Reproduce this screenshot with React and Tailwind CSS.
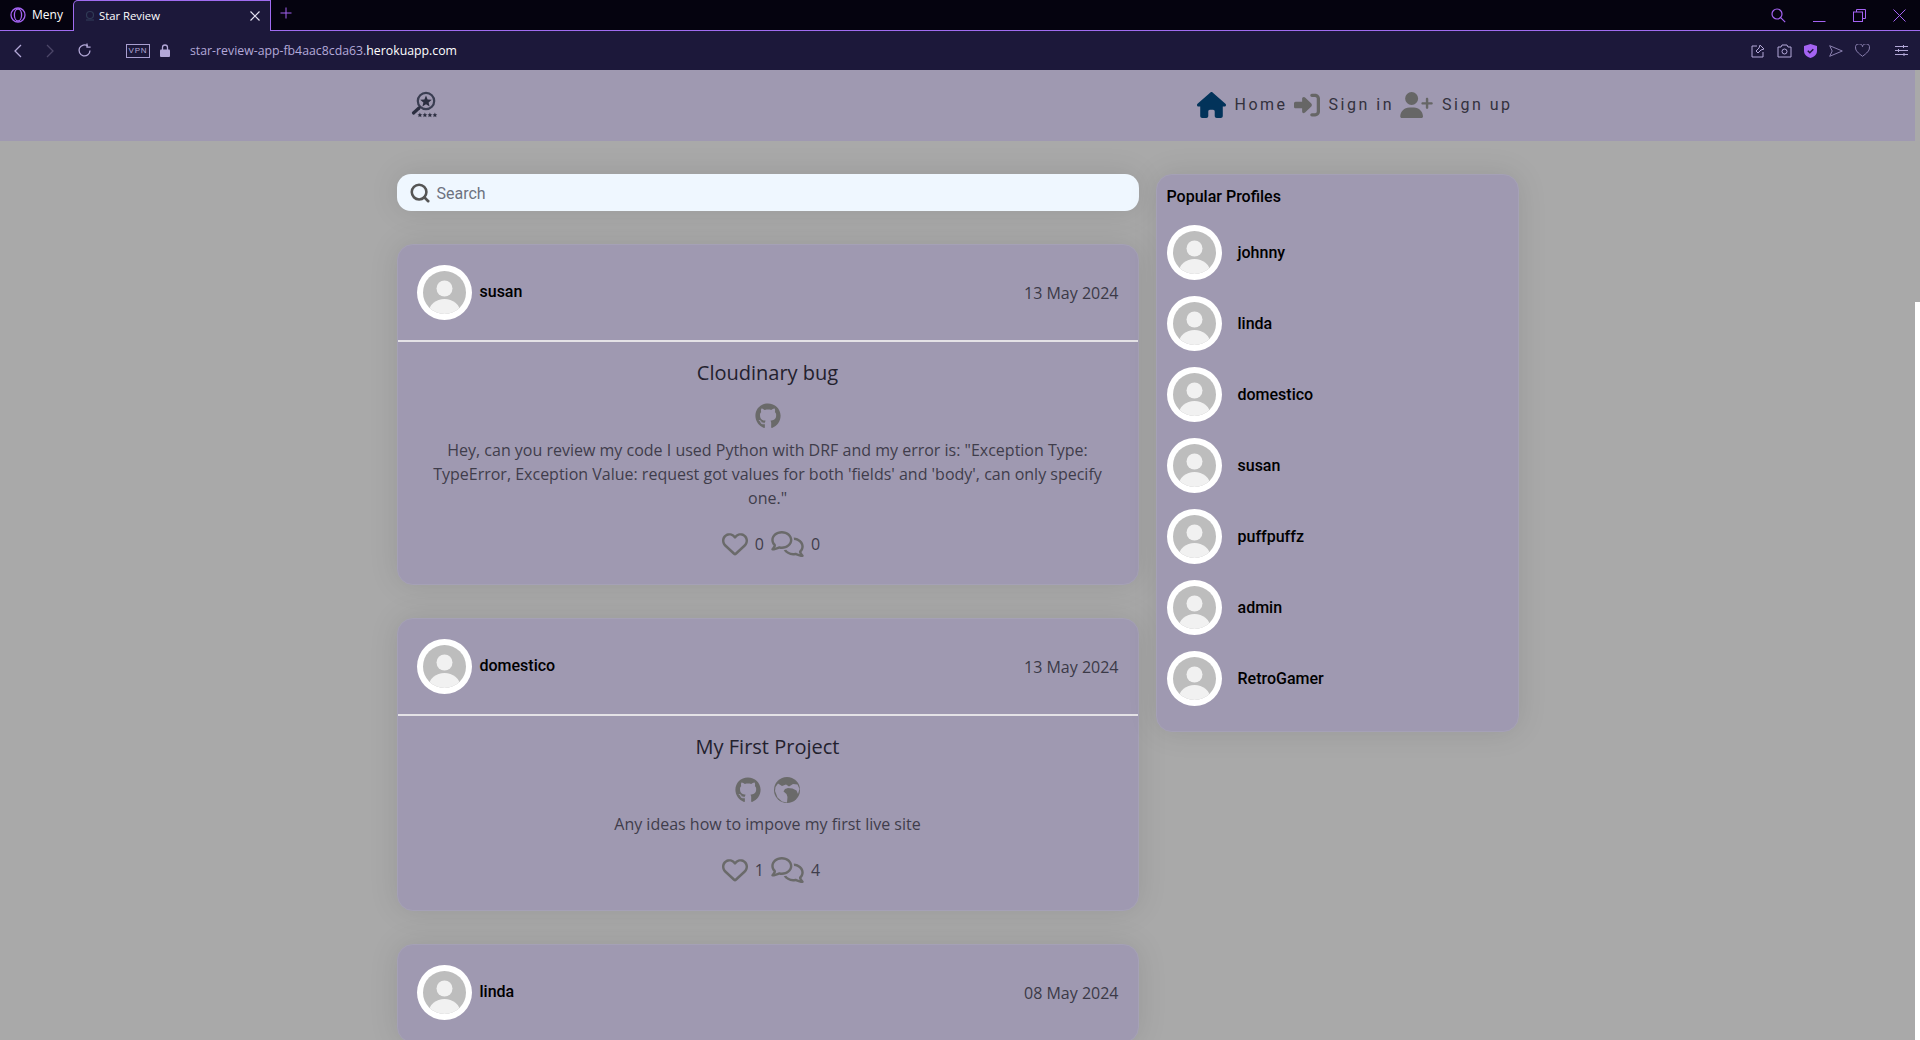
import React from "react";
import { FaHouse, FaRightToBracket, FaUserPlus, FaGithub, FaRegHeart, FaRegComments } from "react-icons/fa6";
import { Search } from "lucide-react";

function Globe() {
  return (
    <svg viewBox="0 0 26 26" className="w-[26px] h-[26px] block">
      <circle cx="13" cy="13" r="13" fill="#6a6a6a" />
      <path d="M4 6.500 L8 9 L12 7.500 L15 9.500 L19 7 L23.500 7.500 L25.500 12 L24 17 L22.500 13.500 L18.500 11.500 L14 11 L11 12 L9.500 14.500 L12.500 17 L13.500 20 L13 25.500 L8 24.500 L3.500 20.500 L1 14 L1.500 10 Z" fill="#9f99b1" />
    </svg>
  );
}

function Avatar() {
  return (
    <div className="w-[55px] h-[55px] shrink-0 rounded-full bg-white p-[6px]">
      <svg viewBox="0 0 43 43" className="w-full h-full block">
        <defs><clipPath id="av"><circle cx="21.5" cy="21.5" r="21.5" /></clipPath></defs>
        <circle cx="21.5" cy="21.5" r="21.5" fill="#bdbdbd" />
        <g clipPath="url(#av)">
          <circle cx="21.5" cy="17.5" r="8" fill="#f1f1f1" />
          <ellipse cx="21.5" cy="41" rx="15.5" ry="13" fill="#f1f1f1" />
        </g>
      </svg>
    </div>
  );
}

function Logo() {
  return (
    <svg viewBox="0 0 30 30" className="w-[30px] h-[30px] block -mt-[2px]">
      <circle cx="16" cy="12" r="8.2" fill="none" stroke="#3a3e52" strokeWidth="2.2" />
      <polygon points="16,6.5 17.6,10.4 21.8,10.700 18.6,13.400 19.600,17.500 16,15.200 12.400,17.500 13.400,13.400 10.200,10.700 14.400,10.400" fill="#2b2e40" />
      <path d="M9 19 L3.500 24" stroke="#2b2e40" strokeWidth="3.2" strokeLinecap="round" />
      {[7.5, 12.5, 17.5, 22.5].map((x) => (
        <polygon key={x} transform={`translate(${x} 23.5) scale(.48)`} points="5,0 6.5,3.5 10,4 7.3,6.2 8.2,10 5,8 1.8,10 2.7,6.2 0,4 3.5,3.5" fill="#2b2e40" />
      ))}
    </svg>
  );
}

function PostHeader({ name, date }) {
  return (
    <div className="h-[97px] flex items-center justify-between px-[19px] border-b-2 border-[#e4e2e6]">
      <div className="flex items-center gap-2">
        <Avatar />
        <span className="font-['Roboto',sans-serif] font-medium text-[16px] text-black -mt-[2px]">{name}</span>
      </div>
      <span className="text-[16px] text-[#3b3947]">{date}</span>
    </div>
  );
}

function Post({ name, date, title, icons, text, likes, comments }) {
  return (
    <article className="rounded-[16px] bg-[#9f99b1] border border-[#a5a1b6] shadow-[0_0_30px_rgba(0,0,0,0.1)] font-['Open_Sans',sans-serif]">
      <PostHeader name={name} date={date} />
      {title && (
        <div className="px-[34px] pt-[17px] pb-[26px] flex flex-col items-center text-center">
          <h2 className="text-[20px] leading-[28px] text-[#23212e] font-medium">{title}</h2>
          <div className="flex items-center gap-[13px] mt-[15px] text-[#6a6a6a] text-[26px] h-[28px]">{icons}</div>
          <p className="mt-[8px] text-[16px] leading-[24px] text-[#3f3d4b]">{text}</p>
          <div className="flex items-center mt-[20px] pl-[7px] h-[28px] text-[16px] text-[#3f3d4b]">
            <FaRegHeart className="text-[26px] text-[#6a6a6a]" />
            <span className="ml-[7px]">{likes}</span>
            <FaRegComments className="text-[26px] w-[33px] text-[#6a6a6a] ml-[7px]" />
            <span className="ml-[7px]">{comments}</span>
          </div>
        </div>
      )}
    </article>
  );
}

function Profile({ name }) {
  return (
    <div className="flex items-center gap-[16px] h-[55px]">
      <Avatar />
      <span className="font-['Roboto',sans-serif] font-medium text-[16px] text-black">{name}</span>
    </div>
  );
}

function NavItem({ icon, label }) {
  return (
    <div className="flex items-center gap-[9px]">
      {icon}
      <span className="font-['Roboto',sans-serif] text-[16px] tracking-[2.5px] text-[#33313d]">{label}</span>
    </div>
  );
}

const P = "#a463f2";
const L = "#b3a8d8";

function Chrome() {
  return (
    <div className="font-['Open_Sans',sans-serif]">
      <div className="h-[31px] flex items-stretch bg-[#05030f] border-b border-[#a06cf0] relative">
        <div className="w-[73px] flex items-center gap-[6px] pl-[10px] text-[12px] text-white">
          <svg width="16" height="16" viewBox="0 0 16 16"><circle cx="8" cy="8" r="7" fill="none" stroke={P} strokeWidth="1.3" /><ellipse cx="8" cy="8" rx="3.6" ry="6" fill="none" stroke={P} strokeWidth="1.3" /></svg>
          <span>Meny</span>
        </div>
        <div className="w-[198px] -mb-px flex items-center bg-[#1c183a] border-t border-x border-[#a06cf0] rounded-tl-[5px] pl-[10px] pr-[9px] text-[11.3px] text-white">
          <svg width="12" height="12" viewBox="0 0 12 12"><circle cx="6" cy="5" r="3.5" fill="none" stroke="#2f3a55" strokeWidth="1.2" /><path d="M2 10h8" stroke="#2f3a55" strokeWidth="1.2" /></svg>
          <span className="ml-[3px] flex-1">Star Review</span>
          <svg width="12" height="12" viewBox="0 0 12 12"><path d="M1.5 1.5l9 9M10.5 1.5l-9 9" stroke="#e6e2f2" strokeWidth="1.2" /></svg>
        </div>
        <div className="ml-[9px] flex items-center pb-[5px]">
          <svg width="12" height="12" viewBox="0 0 12 12"><path d="M6 .5v11M.5 6h11" stroke={P} strokeWidth="1" /></svg>
        </div>
        <div className="flex-1" />
        <div className="flex items-center pr-[14px] gap-[27px]">
          <svg width="15" height="15" viewBox="0 0 15 15"><circle cx="6" cy="6" r="5" fill="none" stroke={P} strokeWidth="1.2" /><path d="M9.7 9.7l4.5 4.5" stroke={P} strokeWidth="1.2" /></svg>
          <svg width="13" height="13" viewBox="0 0 13 13"><path d="M0 12.5h12.5" stroke={P} strokeWidth="1" /></svg>
          <svg width="13" height="13" viewBox="0 0 13 13"><rect x=".5" y="3" width="9" height="9.5" fill="none" stroke={P} /><path d="M3.5 3V.5h9v9H9.5" fill="none" stroke={P} /></svg>
          <svg width="13" height="13" viewBox="0 0 13 13"><path d="M.5.5l12 12M12.5.5l-12 12" stroke={P} /></svg>
        </div>
      </div>
      <div className="h-[39px] bg-[#1c183a] flex items-center relative">
        <div className="w-[35px] flex justify-center"><svg width="9" height="14" viewBox="0 0 9 14"><path d="M8 1L2 7l6 6" fill="none" stroke={L} strokeWidth="1.3" /></svg></div>
        <div className="w-[31px] flex justify-center"><svg width="9" height="14" viewBox="0 0 9 14"><path d="M1 1l6 6-6 6" fill="none" stroke="#4c4668" strokeWidth="1.3" /></svg></div>
        <div className="ml-[11px] w-[16px]"><svg width="15" height="15" viewBox="0 0 15 15" className="block"><path d="M13 7.5A5.5 5.5 0 1 1 10.8 3" fill="none" stroke={L} strokeWidth="1.3" /><path d="M10 .5v3.6h3.6" fill="none" stroke={L} strokeWidth="1.3" /></svg></div>
        <div className="ml-[33px] w-[24px] h-[14px] border border-[#a99fd0] flex items-center justify-center text-[8px] leading-none tracking-[0.8px] text-[#b3a8d8] font-['Liberation_Sans',sans-serif]">VPN</div>
        <div className="ml-[10px]"><svg width="10" height="13" viewBox="0 0 10 13" className="block"><path d="M2.5 6V3.5a2.5 2.5 0 0 1 5 0V6" fill="none" stroke={L} strokeWidth="1.3" /><rect x="0" y="5.5" width="10" height="7.5" rx="1" fill={L} /></svg></div>
        <div className="ml-[20px] mt-[1px] text-[12.3px] text-[#b3a8d8]">star-review-app-fb4aac8cda63.<span className="text-white">herokuapp.com</span></div>
        <div className="flex-1" />
        <div className="flex items-center gap-[12px] pr-[12px] text-[#b3a8d8]">
          <svg width="14" height="14" viewBox="0 0 14 14"><path d="M6 2H1v11h11V8" fill="none" stroke={L} /><path d="M9 1l4 4-3 1-3 3-2-2 3-3z" fill="none" stroke={L} /></svg>
          <svg width="15" height="14" viewBox="0 0 15 14"><path d="M1 3h3l1-2h5l1 2h3v10H1z" fill="none" stroke={L} /><circle cx="7.5" cy="7.5" r="2.5" fill="none" stroke={L} /></svg>
          <svg width="13" height="14" viewBox="0 0 13 14"><path d="M6.5 0L13 2v5c0 3.5-3 6-6.500 7C3 13 0 10.500 0 7V2z" fill={P} /><path d="M3.800 6.800l2 2 3.500-3.500" fill="none" stroke="#1c183a" strokeWidth="1.500" /></svg>
          <svg width="14" height="12" viewBox="0 0 14 12"><path d="M.7.700L13.300 6 .7 11.300 3.200 6z" fill="none" stroke="#8b80b0" /></svg>
          <svg width="15" height="13" viewBox="0 0 15 13"><path d="M7.500 12.300C3 9 .6 6.700.6 4A3.300 3.300 0 0 1 7.500 2.700 3.300 3.300 0 0 1 14.400 4c0 2.700-2.400 5-6.900 8.300z" fill="none" stroke="#8b80b0" /></svg>
          <svg className="ml-[13px]" width="13" height="11" viewBox="0 0 13 11"><path d="M0 1.500h13M0 5.500h13M0 9.500h13" stroke={L} /><path d="M8.500 0v3M3.500 4v3M9 8v3" stroke={L} /></svg>
        </div>
      </div>
    </div>
  );
}

export default function App() {
  return (
    <div className="w-[1920px] h-[1040px] overflow-hidden bg-[#a9a9a9] flex flex-col">
      <Chrome />
      <div className="flex flex-1 min-h-0">
        <div className="w-[1915px] min-w-0">
          <nav className="h-[71px] pb-[2px] bg-[#9f99b1] flex justify-center">
            <div className="w-[1122px] flex items-center justify-between pl-[13px] pr-[6px]">
              <Logo />
              <div className="flex items-center gap-[6px]">
                <NavItem icon={<FaHouse className="text-[#02335a] text-[26px] w-[29px]" />} label="Home" />
                <NavItem icon={<FaRightToBracket className="text-[#666] text-[26px]" />} label="Sign in" />
                <NavItem icon={<FaUserPlus className="text-[#666] text-[26px] w-[33px]" />} label="Sign up" />
              </div>
            </div>
          </nav>
          <main className="w-[1122px] mx-auto flex items-start gap-[17px] pt-[33px]">
            <div className="w-[742px] shrink-0 flex flex-col gap-[33px]">
              <div className="h-[37px] rounded-[14px] bg-[#eff7ff] flex items-center pl-[12px] shadow-[0_0_30px_rgba(0,0,0,0.1)]">
                <Search size={22} strokeWidth={2.8} className="text-[#555]" />
                <span className="ml-[6px] mt-[2px] font-['Roboto',sans-serif] text-[16px] text-[#6d7280]">Search</span>
              </div>
              <Post name="susan" date="13 May 2024" title="Cloudinary bug"
                icons={<FaGithub />}
                text={`Hey, can you review my code I used Python with DRF and my error is: "Exception Type: TypeError, Exception Value: request got values for both 'fields' and 'body', can only specify one."`}
                likes="0" comments="0" />
              <Post name="domestico" date="13 May 2024" title="My First Project"
                icons={<><FaGithub /><Globe /></>}
                text="Any ideas how to impove my first live site"
                likes="1" comments="4" />
              <Post name="linda" date="08 May 2024" title="" />
            </div>
            <aside className="w-[363px] h-[558px] shrink-0 rounded-[16px] bg-[#9f99b1] border border-[#a5a1b6] shadow-[0_0_30px_rgba(0,0,0,0.1)] pl-[10px] pt-[12px]">
              <h3 className="font-['Roboto',sans-serif] font-medium text-[16px] leading-[20px] text-black mb-[18px]">Popular Profiles</h3>
              <div className="flex flex-col gap-[16px]">
                {["johnny", "linda", "domestico", "susan", "puffpuffz", "admin", "RetroGamer"].map((n) => <Profile key={n} name={n} />)}
              </div>
            </aside>
          </main>
        </div>
        <div className="w-[5px] flex flex-col">
          <div className="h-[232px]" />
          <div className="flex-1 bg-white" />
        </div>
      </div>
    </div>
  );
}
